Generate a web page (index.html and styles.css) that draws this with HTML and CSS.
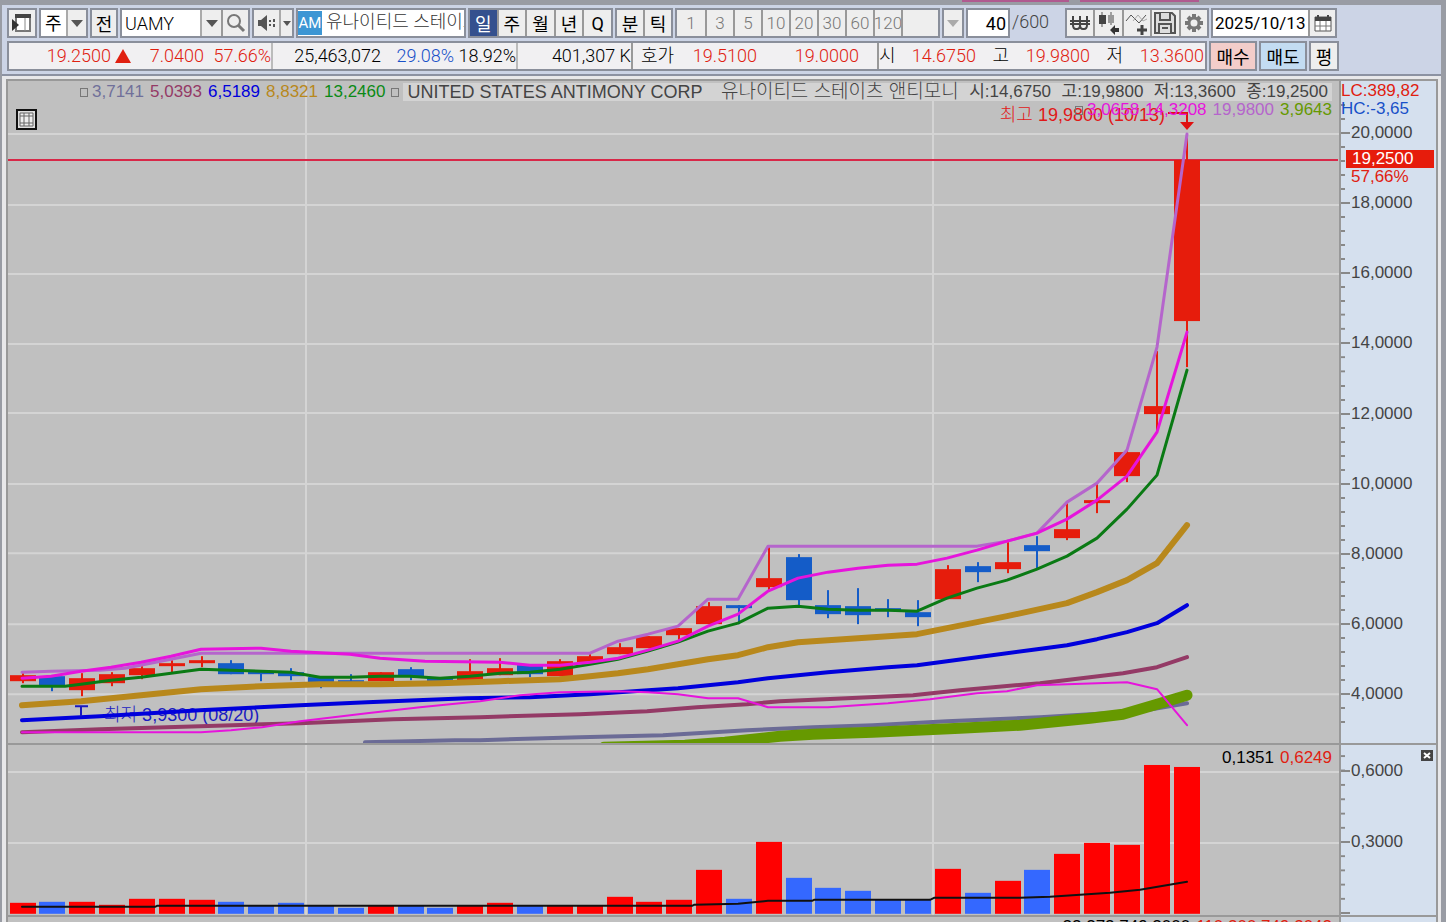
FILE: index.html
```
<!DOCTYPE html>
<html lang="ko">
<head>
    <meta charset="UTF-8">
    <meta name="viewport" content="width=device-width, initial-scale=1.0">
    <title>UAMY - 종합차트</title>
    <link rel="stylesheet" href="styles.css">
</head>
<body>
    <div class="window-edge"><i></i><i></i></div>

    <header class="toolbar">
        <div class="row">
            <button class="group w30" aria-label="패널">
                <svg width="22" height="22" viewBox="0 0 22 22"><path d="M5 3h14v16H5z" fill="#fff" stroke="#777" stroke-width="2"/><path d="M4 2h16v4H4z" fill="#444"/><path d="M14 6v13" stroke="#888"/><path d="M1 7l7 6-7 6z" fill="#333"/></svg>
            </button>
            <div class="group w49">
                <select class="market" aria-label="시장"><option>주</option></select>
                <button class="arrow" aria-label="시장 목록"><svg width="12" height="7"><path d="M0 0h12L6 7z"/></svg></button>
            </div>
            <button class="group w28">전</button>
            <div class="group w130">
                <input class="code" type="text" value="UAMY" aria-label="종목코드">
                <button class="arrow narrow" aria-label="종목 목록"><svg width="12" height="7"><path d="M0 0h12L6 7z"/></svg></button>
                <button class="icon" aria-label="검색"><svg width="20" height="20" viewBox="0 0 20 20" fill="none" stroke="#777"><circle cx="8" cy="8" r="6" stroke-width="2"/><path d="M12 12l6 6" stroke-width="3"/></svg></button>
            </div>
            <div class="group w42">
                <button class="sound" aria-label="소리"><svg width="18" height="16" viewBox="0 0 18 16" fill="#555"><path d="M0 5h3l6-5v16l-6-5H0z"/><path d="M11 5h2v2h-2zM11 9h2v2h-2zM15 4h2v3h-2zM15 9h2v3h-2z"/></svg></button>
                <button class="arrow" aria-label="소리 설정"><svg width="8" height="5"><path d="M0 0h8L4 5z"/></svg></button>
            </div>
            <div class="group w170 name"><b>AM</b><span>유나이티드 스테이츠</span></div>
            <div class="group w145 tabs">
                <button class="on">일</button><button>주</button><button>월</button><button>년</button><button>Q</button>
            </div>
            <div class="group w58 tabs"><button>분</button><button>틱</button></div>
            <div class="group w265 tabs minutes">
                <button>1</button><button>3</button><button>5</button><button>10</button><button>20</button><button>30</button><button>60</button><button>120</button>
                <input type="text" disabled aria-label="분 입력">
            </div>
            <button class="group w22 off" disabled aria-label="분 목록"><svg width="12" height="7"><path d="M0 0h12L6 7z"/></svg></button>
            <input class="group w44 count" type="text" value="40" aria-label="봉 개수">
            <span class="total">/600</span>
            <div class="group w144 tabs">
                <button aria-label="원화"><svg width="22" height="16" viewBox="0 0 22 16" fill="none" stroke="#444" stroke-width="2"><path d="M4 1v9q0 4 3 4h1q3 0 3-4V1M11 1v9q0 4 3 4h1q3 0 3-4V1M1 6h20M1 9h20"/></svg></button>
                <button aria-label="차트 유형"><svg width="22" height="24" viewBox="0 0 22 24"><path d="M4 1v15M13 1v13" stroke="#555"/><path d="M1 4h7v9H1z" fill="#444"/><path d="M10 4h6v8h-6z" fill="#999"/><path d="M12 19l5-5v3h4v4h-4v3z" fill="#333"/></svg></button>
                <button aria-label="지표 추가"><svg width="24" height="24" viewBox="0 0 24 24" fill="none"><path d="M1 10l5-6 8 8 7-8" stroke="#555"/><path d="M8 10l5-6 5 6 4-2" stroke="#aaa"/><path d="M17 14v10M12 19h10" stroke="#444" stroke-width="3"/></svg></button>
                <button aria-label="저장"><svg width="22" height="22" viewBox="0 0 22 22" fill="#ddd" stroke="#555" stroke-width="2"><path d="M1 1h17l3 3v17H1z"/><path d="M6 1v7h10V1M5 21v-9h12v9M8 16h6"/></svg></button>
                <button aria-label="설정"><svg width="20" height="20" viewBox="0 0 20 20" fill="none" stroke="#777"><circle cx="10" cy="10" r="5" stroke-width="3"/><path d="M10 1v3M10 16v3M1 10h3M16 10h3M4 4l2 2M14 14l2 2M16 4l-2 2M4 16l2-2" stroke-width="4"/></svg></button>
            </div>
            <div class="group w126">
                <input class="date" type="text" value="2025/10/13" aria-label="일자">
                <button class="icon" aria-label="달력"><svg width="18" height="17" viewBox="0 0 18 17"><path d="M1 2h16v14H1z" fill="#fff" stroke="#555"/><path d="M1 2h16v4H1z" fill="#444"/><path d="M4 0v3M14 0v3" stroke="#444" stroke-width="2"/><path d="M1 11h16M6 6v10M12 6v10" stroke="#777"/></svg></button>
            </div>
        </div>

        <div class="row quote-row">
            <div class="quote">
                <span class="q102 up">19.2500</span>
                <svg class="mark" width="16" height="14"><path d="M8 0l8 14H0z"/></svg>
                <span class="q73 up">7.0400</span>
                <span class="q69 up line">57.66%</span>
                <span class="q108">25,463,072</span>
                <span class="q73 down">29.08%</span>
                <span class="q64 line">18.92%</span>
                <span class="q113">401,307 K</span>
                <span class="q43 edge">호가</span>
                <span class="q83 up">19.5100</span>
                <span class="q102 up">19.0000</span>
                <span class="q36 edge gap">시</span>
                <span class="q81 up">14.6750</span>
                <span class="q33">고</span>
                <span class="q81 up">19.9800</span>
                <span class="q33">저</span>
                <span class="q81 up">13.3600</span>
            </div>
            <button class="group w48 buy">매수</button>
            <button class="group w48 sell">매도</button>
            <button class="group w30">평</button>
        </div>
    </header>

    <main class="chart">
        <section class="plot price">
            <span class="low-label">최저 3,9300 (08/20)</span>
            <svg viewBox="8 81 1331 662" preserveAspectRatio="none">
                <path class="grid" d="M8 134H1339M8 205H1339M8 274H1339M8 344H1339M8 413H1339M8 484H1339M8 553H1339M8 624H1339M8 694H1339M306 80V743M933 80V743"/>
                <path class="now" d="M8 160H1338"/>
                <g id="candles"></g>
                <polyline stroke="#6b6b96" stroke-width="4" points="365,742 455,740 480,740 580,737 663,735 747,730 813,727 873,725 947,721 1040,717 1140,711 1187,703"/>
                <polyline stroke="#669900" stroke-width="11" points="604,747 685,745 725,742 780,736 813,734 873,732 960,728 1020,725 1090,718 1123,714 1157,704 1187,695"/>
                <polyline stroke="#943a66" stroke-width="4" points="22,732 100,729 200,726 300,723 393,719 480,717 580,714 647,711 697,707 747,704 780,701 847,698 913,695 960,690 1040,683 1123,673 1157,667 1187,657"/>
                <polyline stroke="#0000dc" stroke-width="4" points="22,720 100,716 200,710 300,705 367,702 467,698 530,697 590,694 648,690 678,688 738,682 768,678 828,672 888,667 917,665 977,657 1037,649 1067,645 1097,639 1127,632 1157,623 1187,605"/>
                <polyline stroke="#b8881c" stroke-width="6" points="22,705 51,703 81,701 141,695 201,689 261,686 320,684 380,684 440,683 500,681 560,679 590,676 618,673 648,669 678,664 708,659 738,655 768,647 798,642 828,640 858,638 888,636 917,634 947,628 1007,616 1067,603 1097,592 1127,580 1157,563 1187,525"/>
                <polyline stroke="#0a7a14" stroke-width="3" points="22,686 65,686 81,684 111,680 141,677 171,673 201,669 231,670 261,671 291,672 320,677 350,677 380,676 410,676 440,678 470,676 500,673 530,672 560,669 590,664 618,659 648,651 678,642 708,631 738,623 768,608 798,606 828,609 858,610 888,610 917,611 947,598 977,588 1007,580 1037,569 1067,556 1097,538 1127,509 1157,475 1187,370"/>
                <polyline stroke="#b565cc" stroke-width="3" points="22,672 51,671 100,670 125,668 171,659 201,653 590,653 618,641 648,634 678,626 708,599 738,599 768,546 977,546 1007,541 1037,533 1067,502 1097,483 1127,450 1157,347 1187,134"/>
                <polyline stroke="#e614dc" stroke-width="3" points="22,678 51,676 81,671 111,667 141,662 171,656 201,649 261,648 291,651 350,654 380,658 425,661 500,662 530,665 560,665 590,662 618,658 648,650 678,641 708,626 738,614 768,591 798,578 828,572 858,568 888,565 917,564 947,558 977,550 1007,541 1037,533 1067,519 1097,500 1127,476 1157,432 1187,332"/>
                <polyline stroke="#e614dc" stroke-width="2" points="22,732 201,732 231,730 262,727 300,721 367,713 420,707 480,701 520,695 560,692 618,691 648,692 678,694 708,698 738,698 768,707 828,707 858,705 888,703 930,699 977,693 1007,691 1037,685 1127,682 1157,689 1187,725"/>
                <path class="hi" d="M1168 113H1187V123"/><path class="tip" d="M1180 122h14l-7 8z"/>
                <path class="lo" d="M75 706h13M81 706v10"/>
            </svg>
            <button class="grid-btn" aria-label="표 보기"><svg width="15" height="15" viewBox="0 0 15 15" fill="#eee" stroke="#666"><path d="M1 1h13v13H1zM1 4h13M1 11h13M5 1v13M10 1v13"/></svg></button>
            <div class="legend">
                <i></i>
                <span class="c-slate">3,7141</span>
                <span class="c-plum">5,0393</span>
                <span class="c-blue">6,5189</span>
                <span class="c-gold">8,8321</span>
                <span class="c-green">13,2460</span>
                <i></i>
                <p class="title"><span class="corp">UNITED STATES ANTIMONY CORP</span><span class="kr">유나이티드 스테이츠 앤티모니</span><span>시:14,6750</span><span>고:19,9800</span><span>저:13,3600</span><span>종:19,2500</span></p>
            </div>
            <span class="high-label">최고 19,9800 (10/13)</span>
            <div class="legend second">
                <i></i>
                <span class="c-pink">3,0658</span>
                <span class="c-pink">14,3208</span>
                <span class="c-violet">19,9800</span>
                <span class="c-olive">3,9643</span>
            </div>
        </section>
        <aside class="axis price-axis">
            <div>20,0000</div><div>18,0000</div><div>16,0000</div><div>14,0000</div><div>12,0000</div><div>10,0000</div><div>8,0000</div><div>6,0000</div><div>4,0000</div>
            <p class="extreme"><span class="up">LC:389,82</span><span class="down">HC:-3,65</span></p>
            <p class="current"><b>19,2500</b><span>57,66%</span></p>
        </aside>

        <section class="plot volume">
            <svg viewBox="8 745 1331 170" preserveAspectRatio="none">
                <path class="grid" d="M8 772H1339M8 843H1339M306 744V915M933 744V915"/>
                <g id="bars"></g>
                <polyline stroke="#111" stroke-width="2" points="22,907 155,907 157,906 692,906 694,905 738,904 768,901 812,901 814,900 930,900 934,898 1020,898 1050,897 1080,895 1110,893 1140,890 1187,882"/>
            </svg>
            <div class="legend second"><span>0,1351</span><span class="up">0,6249</span></div>
        </section>
        <aside class="axis volume-axis">
            <div>0,6000</div><div>0,3000</div><div></div>
            <button class="close" aria-label="닫기"><svg width="12" height="11" viewBox="0 0 12 11"><path d="M3 3l6 5M9 3L3 8" stroke="#fff" stroke-width="2"/></svg></button>
        </aside>

        <section class="plot next"><div class="legend second"><span>22,272,749,2000</span><span class="up">110,200,749,2042</span></div></section>
        <aside class="axis next"><button class="close" aria-label="닫기"></button></aside>
    </main>

    <script>
        // direction, high, body top, body bottom, low, volume top
        const candles = [
            ['r', 673, 675, 681, 683, 903], ['b', 675, 676, 686, 691, 902], ['r', 673, 678, 690, 696, 902],
            ['r', 672, 674, 683, 686, 905], ['r', 666, 668, 675, 679, 899], ['r', 660, 663, 666, 673, 899],
            ['r', 656, 660, 663, 667, 900], ['b', 660, 663, 674, 674, 902], ['b', 671, 671, 674, 681, 906],
            ['b', 668, 672, 676, 680, 903], ['b', 677, 677, 682, 688, 906], ['b', 674, 680, 683, 683, 908],
            ['r', 672, 672, 681, 681, 906], ['b', 667, 669, 676, 680, 906], ['b', 677, 677, 681, 681, 908],
            ['r', 659, 671, 680, 680, 906], ['r', 658, 668, 675, 675, 903], ['b', 665, 665, 674, 677, 906],
            ['r', 659, 661, 676, 676, 906], ['r', 653, 656, 662, 662, 906], ['r', 643, 647, 654, 654, 897],
            ['r', 636, 636, 648, 648, 902], ['r', 628, 628, 635, 640, 900], ['r', 602, 606, 624, 624, 870],
            ['b', 605, 605, 608, 624, 899], ['r', 547, 578, 587, 591, 842], ['b', 554, 557, 600, 605, 878],
            ['b', 590, 605, 614, 618, 888], ['b', 588, 606, 615, 624, 891], ['b', 599, 608, 611, 617, 900],
            ['b', 600, 612, 617, 626, 900], ['r', 565, 569, 599, 599, 869], ['b', 562, 566, 572, 582, 893],
            ['r', 542, 562, 569, 573, 881], ['b', 536, 545, 551, 569, 870], ['r', 503, 529, 538, 540, 854],
            ['r', 484, 500, 503, 513, 843], ['r', 450, 452, 476, 482, 845], ['r', 351, 406, 414, 431, 765],
            ['r', 134, 160, 321, 367, 767]
        ];
        let body = '';
        let bars = '';
        candles.forEach(([dir, high, top, bottom, low, vol], i) => {
            const x = Math.round(22.5 + i * 29.85);
            body += `<g class="${dir}"><rect x="${x - 1}" y="${high}" width="2" height="${low - high}"/>` +
                `<rect x="${x - 13}" y="${top}" width="26" height="${bottom - top}"/></g>`;
            bars += `<rect class="${dir}" x="${x - 13}" y="${vol}" width="26" height="${914 - vol}"/>`;
        });
        document.getElementById('candles').innerHTML = body;
        document.getElementById('bars').innerHTML = bars;
    </script>
</body>
</html>
```
FILE: styles.css
```
* { box-sizing: border-box; }
body {
    margin: 0;
    height: 100vh;
    display: flex;
    flex-direction: column;
    overflow: hidden;
    background: #ccd4e6;
    border-left: 2px solid #999ca4;
    border-right: 5px solid #999ca4;
    font-family: Roboto, "Noto Sans CJK KR", sans-serif;
    font-size: 18px;
    color: #000;
}
p { margin: 0; }
button, input, select {
    font: inherit;
    color: inherit;
    margin: 0;
    padding: 0;
    border: 0;
    border-radius: 0;
    background: #eee;
    min-width: 0;
}
button {
    display: flex;
    align-items: center;
    justify-content: center;
    overflow: hidden;
    white-space: nowrap;
}
.up { color: #e02010; }
.down { color: #1850c8; }

.window-edge {
    height: 5px;
    flex: none;
    display: flex;
    justify-content: flex-end;
    gap: 11px;
    padding-right: 242px;
    background: #999ca4;
}
.window-edge i { width: 107px; height: 2px; background: #b05a90; }
.window-edge i + i { width: 119px; }

/* toolbar */
.toolbar {
    flex: none;
    padding: 3px 5px;
    border-bottom: 2px solid #8c92a2;
}
.row { display: flex; gap: 2px; height: 30px; }
.quote-row { margin-top: 3px; font-weight: 300; }
.group {
    flex: none;
    display: flex;
    border: 2px solid #8a8f9b;
    background: #eee;
    overflow: hidden;
}
.w22 { width: 22px; }
.w28 { width: 28px; }
.w30 { width: 30px; }
.w42 { width: 42px; }
.w44 { width: 44px; }
.w48 { width: 48px; }
.w49 { width: 49px; }
.w58 { width: 58px; }
.w126 { width: 126px; }
.w130 { width: 130px; }
.w144 { width: 144px; }
.w145 { width: 145px; }
.w170 { width: 170px; }
.w265 { width: 265px; }
.market { width: 25px; padding-left: 4px; appearance: none; background: #fff; }
.arrow { flex: 1; border-left: 2px solid #aaa; }
.arrow svg { fill: #555; }
.narrow { flex: 0 0 21px; }
.code { flex: 1; width: 0; padding-left: 3px; background: #fff; font-weight: 300; }
.icon { flex: 0 0 27px; border-left: 2px solid #999; }
.sound { width: 25px; }
.name { background: #fff; color: #333; white-space: nowrap; line-height: 24px; font-weight: 300; }
.name b { margin: 1px 4px 1px 0; width: 24px; flex: none; background: #3c96d4; color: #fff; font-size: 15px; font-weight: 400; text-align: center; }
.tabs > * { flex: 1; }
.tabs > * + * { border-left: 2px solid #999; }
.tabs .on { background: #34508e; color: #fff; }
.minutes { color: #777; font-weight: 300; }
.minutes button { flex: 0 0 28px; font-size: 17px; }
.minutes input { width: 0; }
.off svg { fill: #aaa; }
.count { text-align: right; background: #fff; padding-right: 2px; }
.total { width: 51px; line-height: 28px; color: #444; font-weight: 300; }
.date { flex: 1; width: 0; padding-left: 2px; background: #fff; font-size: 17px; }

.quote {
    display: flex;
    width: 1200px;
    flex: none;
    border: 2px solid #8a8f9b;
    background: #f1f0f2;
    line-height: 26px;
    text-align: right;
    white-space: nowrap;
}
.quote span { flex: none; }
.mark { margin: 6px 0 0 4px; flex: none; fill: #e02010; }
.line { border-right: 2px solid #bbb; }
.edge { border-left: 2px solid #999; }
.quote .gap { margin-left: 18px; width: 18px; }
.q33 { width: 33px; }
.q36 { width: 36px; }
.q43 { width: 43px; }
.q64 { width: 64px; }
.q69 { width: 69px; }
.q73 { width: 73px; }
.q81 { width: 81px; }
.q83 { width: 83px; }
.q102 { width: 102px; }
.q108 { width: 108px; }
.q113 { width: 113px; }
.quote-row .group { font-weight: 400; }
.buy { background: #f3cdca; }
.sell { background: #c3dcf2; }

/* chart */
.chart {
    flex: 1;
    min-height: 0;
    display: grid;
    grid-template-columns: minmax(0, 1fr) 99px;
    grid-template-rows: minmax(0, 665fr) minmax(0, 172fr) 7px;
    border: solid #e8e8ea;
    border-width: 3px 3px 0 4px;
    font-family: "Liberation Sans", "Noto Sans CJK KR", sans-serif;
    font-size: 17px;
    line-height: 18px;
}
.plot {
    position: relative;
    overflow: hidden;
    background: #c0c0c0;
    border-left: 2px solid #999;
    border-top: 2px solid #999;
}
.plot > svg { position: absolute; inset: 0; width: 100%; height: 100%; }
.plot polyline { fill: none; stroke-linecap: round; stroke-linejoin: round; }
.grid { fill: none; stroke: #d4d4d4; stroke-width: 2; }
.now { stroke: #d82848; stroke-width: 2; }
.hi { fill: none; stroke: #e01010; stroke-width: 2; }
.lo { fill: none; stroke: #1818c0; stroke-width: 2; }
.tip { fill: #e01010; }
.price .r { fill: #e61c0c; }
.price .b { fill: #145cc8; }
.volume .r { fill: #ff0000; }
.volume .b { fill: #3468ff; }
.grid-btn { position: absolute; left: 8px; top: 28px; width: 21px; height: 21px; border: 2px solid #111; background: #ddd; }
.legend {
    position: absolute;
    left: 72px;
    right: 7px;
    top: 2px;
    display: flex;
    align-items: center;
    gap: 6px;
    white-space: nowrap;
}
.legend i { width: 8px; height: 9px; border: 1px solid #777; margin-right: -2px; flex: none; }
.legend .title {
    flex: 1;
    display: flex;
    justify-content: space-between;
    padding: 0 4px;
    background: #d3d3d3;
    color: #444;
}
.title .corp { font-size: 18px; margin-right: 8px; }
.title .kr { font-size: 19px; font-weight: 300; }
.second { justify-content: flex-end; top: 20px; }
.volume .second { top: 4px; }
.next .second { top: 1px; }
.c-slate { color: #70709a; }
.c-plum { color: #943a66; }
.c-blue { color: #0000dc; }
.c-gold { color: #b8881c; }
.c-green { color: #0a8a14; }
.c-pink { color: #e614dc; }
.c-violet { color: #b565cc; }
.c-olive { color: #669900; }
.high-label, .low-label { position: absolute; font-size: 18px; font-weight: 300; }
.high-label { right: 174px; top: 25px; color: #e01818; }
.low-label { left: 96px; bottom: 19px; color: #1c1cc0; }

.axis {
    position: relative;
    overflow: hidden;
    display: flex;
    flex-direction: column;
    background: #d5e0ee;
    border: solid #999;
    border-width: 2px 2px 0 2px;
    color: #444;
}
.axis > div {
    flex: 1;
    display: flex;
    align-items: center;
    background: linear-gradient(transparent 6px, #888 6px, #888 8px, transparent 8px) 0 0 / 4px 20% repeat-y;
}
.axis > div::before { content: ""; width: 9px; height: 2px; margin-right: 1px; background: #888; }
.price-axis { padding: 17px 0 14px; }
.volume-axis > div { flex: 0 0 42%; }
.volume-axis > div:first-child { margin-top: -10px; }
.extreme { position: absolute; left: 0; top: 1px; display: grid; }
.current { position: absolute; left: 5px; right: 2px; top: 69px; color: #e02010; }
.current b { display: block; padding-left: 6px; background: #e61c0c; color: #fff; font-weight: 400; }
.current span { padding-left: 5px; }
.close { position: absolute; right: 3px; top: 5px; width: 12px; height: 11px; background: #444; }
```
